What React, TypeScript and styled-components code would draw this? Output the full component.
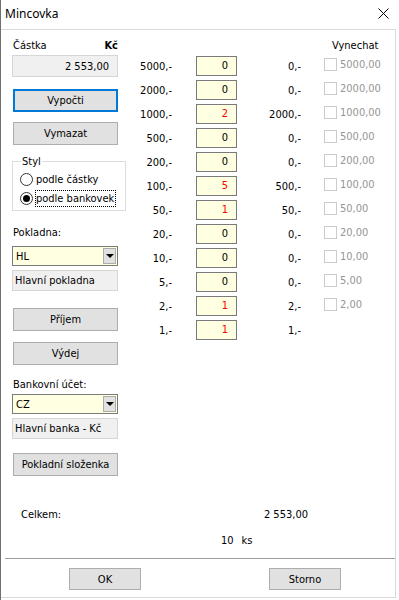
import React from 'react';
import styled, { createGlobalStyle } from 'styled-components';

const GlobalStyle = createGlobalStyle`
  html, body {
    margin: 0;
    padding: 0;
    background: #ffffff;
  }
  body {
    font-family: "DejaVu Sans Condensed", "Liberation Sans", sans-serif;
    font-size: 11px;
    color: #000000;
  }
`;

interface Denomination {
  value: number;
  count: number;
  skippable: boolean;
}

const denominations: Denomination[] = [
  { value: 5000, count: 0, skippable: true },
  { value: 2000, count: 0, skippable: true },
  { value: 1000, count: 2, skippable: true },
  { value: 500, count: 0, skippable: true },
  { value: 200, count: 0, skippable: true },
  { value: 100, count: 5, skippable: true },
  { value: 50, count: 1, skippable: true },
  { value: 20, count: 0, skippable: true },
  { value: 10, count: 0, skippable: true },
  { value: 5, count: 0, skippable: true },
  { value: 2, count: 1, skippable: true },
  { value: 1, count: 1, skippable: false },
];

/* window chrome */
const Window = styled.div`
  width: 398px;
  height: 600px;
  border-left: 1px solid #6f6f6f;
  background: #ffffff;
  display: flex;
  flex-direction: column;
  overflow: hidden;
`;

const TitleBar = styled.div`
  height: 29px;
  display: flex;
  align-items: center;
  justify-content: space-between;
  padding: 0 10px 2px 4px;
  box-sizing: border-box;
  font-family: "Noto Sans", "Open Sans", sans-serif;
  font-size: 12px;
`;

const CloseIcon = styled.svg`
  width: 11px;
  height: 11px;
`;

const Panel = styled.div`
  width: 395px;
  height: 569px;
  box-sizing: border-box;
  border: 1px solid #dadada;
  border-left: none;
  display: flex;
  flex-direction: column;
`;

/* main area */
const Main = styled.div`
  display: flex;
  height: 452px;
`;

const LeftColumn = styled.div`
  width: 128px;
  padding: 9px 0 0 11px;
  box-sizing: border-box;
  display: flex;
  flex-direction: column;
`;

const LabelRow = styled.div<{ $mt?: number }>`
  height: 14px;
  line-height: 14px;
  margin-top: ${p => p.$mt ?? 0}px;
  display: flex;
  justify-content: space-between;
  width: 106px;
  padding-left: 1px;
  box-sizing: border-box;
`;

const Currency = styled.span`
  font-weight: bold;
`;

const ReadField = styled.div<{ $mt: number; $align?: 'left' | 'right'; $h?: number }>`
  width: 106px;
  height: ${p => p.$h ?? 21}px;
  margin-top: ${p => p.$mt}px;
  box-sizing: border-box;
  background: #f0f0f0;
  border: 1px solid #d6d6d6;
  display: flex;
  align-items: center;
  justify-content: ${p => (p.$align === 'right' ? 'flex-end' : 'flex-start')};
  padding: 0 8px 0 2px;
  white-space: nowrap;
`;

const Button = styled.button<{ $mt?: number; $focused?: boolean; $w?: number }>`
  width: ${p => p.$w ?? 105}px;
  height: ${p => (p.$w ? 22 : 23)}px;
  margin-top: ${p => p.$mt ?? 0}px;
  margin-left: ${p => (p.$w ? 0 : 1)}px;
  box-sizing: border-box;
  background: #e1e1e1;
  border: ${p => (p.$focused ? '2px solid #0078d7' : '1px solid #adadad')};
  font-family: inherit;
  font-size: 11px;
  color: #000000;
  padding: 0;
  border-radius: 0;
`;

const GroupBox = styled.fieldset`
  width: 114px;
  margin: 10px 0 0 0;
  padding: 2px 0 0 7px;
  box-sizing: border-box;
  height: 56px;
  border: 1px solid #dcdcdc;
  min-width: 0;
`;

const Legend = styled.legend`
  padding: 0 1px;
  margin-left: 1px;
  line-height: 13px;
`;

const RadioRow = styled.div`
  height: 19px;
  display: flex;
  align-items: center;
  gap: 2px;
`;

const RadioCircle = styled.span<{ $checked: boolean }>`
  width: 13px;
  height: 13px;
  box-sizing: border-box;
  border-radius: 50%;
  border: 1px solid #333333;
  background: #ffffff;
  display: flex;
  align-items: center;
  justify-content: center;

  &::after {
    content: '';
    width: 7px;
    height: 7px;
    border-radius: 50%;
    background: ${p => (p.$checked ? '#000000' : 'transparent')};
  }
`;

const RadioLabel = styled.span<{ $focus?: boolean }>`
  border: 1px dotted ${p => (p.$focus ? '#000000' : 'transparent')};
  line-height: 15px;
  padding: 0 1px 0 0;
`;

const Combo = styled.div<{ $mt: number }>`
  width: 106px;
  height: 20px;
  margin-top: ${p => p.$mt}px;
  box-sizing: border-box;
  background: #ffffe1;
  border: 1px solid #7a7a7a;
  display: flex;
  align-items: center;
  justify-content: space-between;
  padding: 0 1px 0 3px;
`;

const DropButton = styled.span`
  width: 13px;
  height: 16px;
  box-sizing: border-box;
  background: #e1e1e1;
  border: 1px solid #adadad;
  display: flex;
  align-items: center;
  justify-content: center;

  &::after {
    content: '';
    border-left: 4px solid transparent;
    border-right: 4px solid transparent;
    border-top: 4px solid #000000;
  }
`;

/* denomination table */
const Table = styled.div`
  flex: 1;
  padding-top: 6px;
  display: flex;
  flex-direction: column;
`;

const TableHeader = styled.div`
  height: 20px;
  line-height: 20px;
  padding-left: 203px;
`;

const Grid = styled.div`
  display: grid;
  grid-template-columns: 43px 65px 64px 1fr;
  grid-auto-rows: 20px;
  row-gap: 4px;
  align-items: center;
`;

const DenomLabel = styled.div`
  text-align: right;
  white-space: nowrap;
`;

const CountBox = styled.div<{ $nonzero: boolean }>`
  margin-left: 24px;
  width: 41px;
  height: 20px;
  box-sizing: border-box;
  background: #ffffe1;
  border: 1px solid #7a7a7a;
  text-align: right;
  line-height: 18px;
  padding-right: 8px;
  color: ${p => (p.$nonzero ? '#ff0000' : '#000000')};
`;

const Sum = styled.div`
  text-align: right;
  white-space: nowrap;
`;

const SkipCell = styled.div`
  padding-left: 23px;
  display: flex;
  align-items: center;
  gap: 3px;
  color: #969696;
  margin-top: -3px;
`;

const CheckBox = styled.span`
  width: 13px;
  height: 13px;
  box-sizing: border-box;
  border: 1px solid #cccccc;
  background: #ffffff;
`;

/* totals and footer */
const TotalRow = styled.div<{ $mt: number }>`
  display: grid;
  grid-template-columns: 200px 87px;
  padding-left: 20px;
  height: 14px;
  line-height: 14px;
  margin-top: ${p => p.$mt}px;
`;

const TotalValue = styled.span`
  text-align: right;
`;

const PieceCount = styled.span`
  display: flex;
  gap: 8px;
`;

const Separator = styled.div`
  height: 1px;
  margin: 10px 0 0 4px;
  background: #a0a0a0;
`;

const ButtonBar = styled.div`
  display: flex;
  gap: 128px;
  padding-left: 68px;
  margin-top: 9px;
`;

const formatAmount = (n: number) =>
  n.toLocaleString('cs-CZ', { minimumFractionDigits: 2 }).replace(/\s/g, ' ');

const App: React.FC = () => {
  const total = denominations.reduce((s, d) => s + d.value * d.count, 0);
  const pieces = denominations.reduce((s, d) => s + d.count, 0);

  return (
    <>
      <GlobalStyle />
      <Window>
        <TitleBar>
          <span>Mincovka</span>
          <CloseIcon viewBox="0 0 11 11">
            <path d="M0.5 0.5 L10.5 10.5 M10.5 0.5 L0.5 10.5" stroke="#000" strokeWidth="1" />
          </CloseIcon>
        </TitleBar>
        <Panel>
          <Main>
            <LeftColumn>
              <LabelRow>
                <span>Částka</span>
                <Currency>Kč</Currency>
              </LabelRow>
              <ReadField $mt={2} $h={22} $align="right">{formatAmount(total)}</ReadField>
              <Button $mt={12} $focused>Vypočti</Button>
              <Button $mt={10}>Vymazat</Button>
              <GroupBox>
                <Legend>Styl</Legend>
                <RadioRow>
                  <RadioCircle $checked={false} />
                  <RadioLabel>podle částky</RadioLabel>
                </RadioRow>
                <RadioRow>
                  <RadioCircle $checked />
                  <RadioLabel $focus>podle bankovek</RadioLabel>
                </RadioRow>
              </GroupBox>
              <LabelRow $mt={15}>Pokladna:</LabelRow>
              <Combo $mt={6}>
                <span>HL</span>
                <DropButton />
              </Combo>
              <ReadField $mt={4}>Hlavní pokladna</ReadField>
              <Button $mt={17}>Příjem</Button>
              <Button $mt={11}>Výdej</Button>
              <LabelRow $mt={13}>Bankovní účet:</LabelRow>
              <Combo $mt={2}>
                <span>CZ</span>
                <DropButton />
              </Combo>
              <ReadField $mt={4}>Hlavní banka - Kč</ReadField>
              <Button $mt={14}>Pokladní složenka</Button>
            </LeftColumn>
            <Table>
              <TableHeader>Vynechat</TableHeader>
              <Grid>
                {denominations.map(d => (
                  <React.Fragment key={d.value}>
                    <DenomLabel>{d.value},-</DenomLabel>
                    <CountBox $nonzero={d.count > 0}>{d.count}</CountBox>
                    <Sum>{d.value * d.count},-</Sum>
                    {d.skippable ? (
                      <SkipCell>
                        <CheckBox />
                        <span>{d.value},00</span>
                      </SkipCell>
                    ) : (
                      <div />
                    )}
                  </React.Fragment>
                ))}
              </Grid>
            </Table>
          </Main>
          <TotalRow $mt={26}>
            <span>Celkem:</span>
            <TotalValue>{formatAmount(total)}</TotalValue>
          </TotalRow>
          <TotalRow $mt={12}>
            <span />
            <PieceCount>
              <span>{pieces}</span>
              <span>ks</span>
            </PieceCount>
          </TotalRow>
          <Separator />
          <ButtonBar>
            <Button $w={72}>OK</Button>
            <Button $w={72}>Storno</Button>
          </ButtonBar>
        </Panel>
      </Window>
    </>
  );
};

export default App;
